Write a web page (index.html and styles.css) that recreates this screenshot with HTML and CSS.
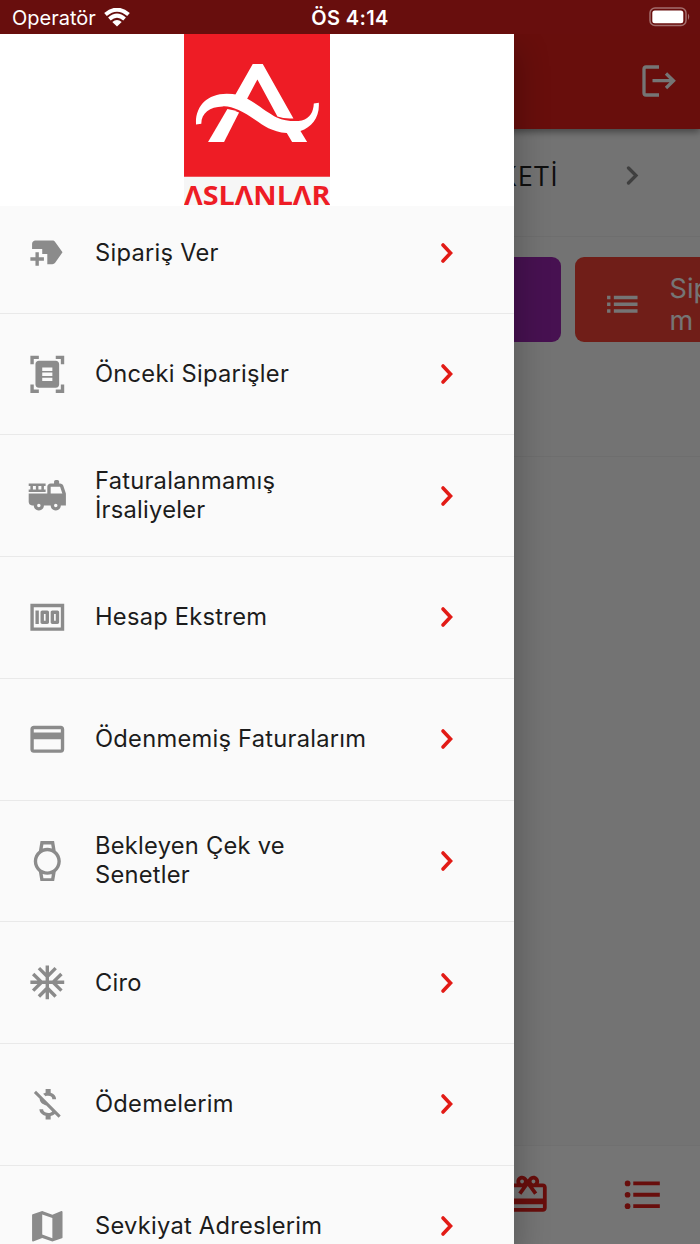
FILE: index.html
```html
<!DOCTYPE html>
<html lang="tr">
<head>
<meta charset="utf-8">
<title>Aslanlar</title>
<link rel="stylesheet" href="styles.css">
</head>
<body>
<div class="phone">
  <main class="screen">
    <header class="appbar">
      <svg class="logout" viewBox="0 0 34 32"><path d="M17 2H4Q2 2 2 4V28Q2 30 4 30H17M10.500 15.700H31M24 8.500L31.500 15.700L24 23" fill="none" stroke="currentColor" stroke-width="3.300"/></svg>
    </header>
    <section class="company">
      <span class="company-name">ŞİRKETİ</span>
      <svg class="company-arrow" viewBox="0 0 12 20"><path d="M2 2L9.500 9.500L2 17" fill="none" stroke="currentColor" stroke-width="3.300" stroke-linecap="round"/></svg>
    </section>
    <section class="cards">
      <div class="card purple"></div>
      <div class="card red">
        <svg class="icon" viewBox="0 0 24 24"><path d="M3 13h2v-2H3v2zm0 4h2v-2H3v2zm0-8h2V7H3v2zm4 4h14v-2H7v2zm0 4h14v-2H7v2zM7 7v2h14V7H7z"/></svg>
        <span class="card-label">Sip<br>m</span>
      </div>
    </section>
    <nav class="tabs">
      <svg class="tab" viewBox="0 0 24 24"><path d="M20 6h-2.180c.11-.31.18-.65.18-1 0-1.660-1.340-3-3-3-1.050 0-1.960.54-2.500 1.350l-.5.67-.5-.68C10.960 2.540 10.050 2 9 2 7.340 2 6 3.340 6 5c0 .35.07.69.18 1H4c-1.110 0-1.990.89-1.990 2L2 19c0 1.110.89 2 2 2h16c1.110 0 2-.89 2-2V8c0-1.110-.89-2-2-2zm-5-2c.55 0 1 .45 1 1s-.45 1-1 1-1-.45-1-1 .45-1 1-1zM9 4c.55 0 1 .45 1 1s-.45 1-1 1-1-.45-1-1 .45-1 1-1zm11 15H4v-2h16v2zm0-5H4V8h5.080L7 10.830 8.620 12 11 8.760l1-1.360 1 1.360L15.380 12 17 10.830 14.920 8H20v6z"/></svg>
      <svg class="tab" viewBox="0 0 24 24"><circle cx="4" cy="6" r="1.500"/><circle cx="4" cy="12" r="1.500"/><circle cx="4" cy="18" r="1.500"/><path d="M7 5h14v2H7zM7 11h14v2H7zM7 17h14v2H7z"/></svg>
    </nav>
  </main>
  <div class="scrim"></div>
  <aside class="drawer">
    <div class="brand">
      <svg class="logo" viewBox="42 12 439 514" role="img" aria-label="ASLANLAR">
        <path fill="#f6f6f6" d="M42 12H481V526H42Z"/>
        <path fill="#ee1c25" d="M42 12H481V440H42Z"/>
        <g fill="#fff">
          <path d="M248 102H278L370 265Q342 267 322 259L262 148L230 208L194 197Z"/>
          <path d="M78 283C75 230 110 191 170 191C195 191 215 196 232 206C262 222 295 250 320 262C345 273 375 275 395 271C420 264 430 245 431 220L446 218C449 262 425 290 391 303L411 336H366L350 309C305 306 280 286 256 270C218 244 185 227 158 229C118 230 93 250 94 281Z"/>
          <path d="M172 237Q190 239 207 247L162 336H114Z"/>
        </g>
        <text class="logo-text" x="42" y="524" textLength="439" lengthAdjust="spacingAndGlyphs">ΛSLΛNLΛR</text>
      </svg>
    </div>
    <ul class="menu">
      <li class="item first"><svg class="icon" viewBox="0 0 24 24"><path d="M21 12l-4.370 6.160C16.260 18.680 15.650 19 15 19h-3v-6H9v-3H3V7c0-1.100.9-2 2-2h10c.65 0 1.260.31 1.630.84L21 12zM10 15H7v-3H5v3H2v2h3v3h2v-3h3z"/></svg><span class="label">Sipariş Ver</span><svg class="chev" viewBox="0 0 14 22"><path d="M3 3L10.500 11L3 19"/></svg></li>
      <li class="item"><svg class="icon" viewBox="0 0 24 24"><path fill-rule="evenodd" d="M7 3H4v3H2V1h5zM22 6V1h-5v2h3v3zM7 21H4v-3H2v5h5zM20 18v3h-3v2h5v-5zM19 18c0 1.100-.9 2-2 2H7c-1.100 0-2-.9-2-2V6c0-1.100.9-2 2-2h10c1.100 0 2 .9 2 2zM15 8H9v2h6zM15 11H9v2h6zM15 14H9v2h6z"/></svg><span class="label">Önceki Siparişler</span><svg class="chev" viewBox="0 0 14 22"><path d="M3 3L10.500 11L3 19"/></svg></li>
      <li class="item"><svg class="icon" viewBox="0 0 24 24"><path fill-rule="evenodd" d="M22.900 10.690l-1.440-4.320C21.180 5.550 20.420 5 19.560 5H19V4c0-.55-.45-1-1-1h-1c-.55 0-1 .45-1 1v1h-2c-1.100 0-2 .9-2 2v4H1v5c0 1.100.9 2 2 2h1c0 1.660 1.340 3 3 3s3-1.340 3-3h4c0 1.660 1.340 3 3 3s3-1.340 3-3h3v-6.680c0-.21-.03-.42-.1-.63zM7 19c-.55 0-1-.45-1-1s.45-1 1-1 1 .45 1 1-.45 1-1 1zM17 19c-.55 0-1-.45-1-1s.45-1 1-1 1 .45 1 1-.45 1-1 1zM14 11V7h5.560l1.330 4zM11 8.500h-1v-2h1V5H1v1.500h1v2H1V10h10zM5.250 8.500H3.500v-2h1.750zM8.500 8.500H6.750v-2H8.500z"/></svg><span class="label">Faturalanmamış<br>İrsaliyeler</span><svg class="chev" viewBox="0 0 14 22"><path d="M3 3L10.500 11L3 19"/></svg></li>
      <li class="item"><svg class="icon" viewBox="0 0 24 24"><path fill-rule="evenodd" d="M5 8h2v8H5zM12 8H9c-.55 0-1 .45-1 1v6c0 .55.45 1 1 1h3c.55 0 1-.45 1-1V9c0-.55-.45-1-1-1zM11 14h-1v-4h1zM18 8h-3c-.55 0-1 .45-1 1v6c0 .55.45 1 1 1h3c.55 0 1-.45 1-1V9c0-.55-.45-1-1-1zM17 14h-1v-4h1zM2 4v16h20V4zM20 18H4V6h16z"/></svg><span class="label">Hesap Ekstrem</span><svg class="chev" viewBox="0 0 14 22"><path d="M3 3L10.500 11L3 19"/></svg></li>
      <li class="item"><svg class="icon" viewBox="0 0 24 24"><path d="M20 4H4c-1.110 0-1.990.89-1.990 2L2 18c0 1.110.89 2 2 2h16c1.110 0 2-.89 2-2V6c0-1.110-.89-2-2-2zm0 14H4v-6h16v6zm0-10H4V6h16v2z"/></svg><span class="label">Ödenmemiş Faturalarım</span><svg class="chev" viewBox="0 0 14 22"><path d="M3 3L10.500 11L3 19"/></svg></li>
      <li class="item"><svg class="icon" viewBox="0 0 24 24"><path d="M14.310 2l.41 2.480C13.870 4.170 12.960 4 12 4c-.95 0-1.870.17-2.710.47L9.700 2h4.600m.41 17.520L14.310 22H9.700l-.41-2.470c.84.3 1.760.47 2.710.47.96 0 1.870-.17 2.720-.48M16 0H8l-.95 5.730C5.190 7.190 4 9.450 4 12s1.190 4.810 3.050 6.270L8 24h8l.96-5.730C18.810 16.810 20 14.540 20 12s-1.190-4.810-3.040-6.270L16 0zm-4 18c-3.310 0-6-2.690-6-6s2.690-6 6-6 6 2.690 6 6-2.690 6-6 6z"/></svg><span class="label">Bekleyen Çek ve<br>Senetler</span><svg class="chev" viewBox="0 0 14 22"><path d="M3 3L10.500 11L3 19"/></svg></li>
      <li class="item"><svg class="icon" viewBox="0 0 24 24"><path d="M22 11h-4.170l3.240-3.240-1.410-1.420L15 11h-2V9l4.660-4.660-1.420-1.410L13 6.170V2h-2v4.170L7.760 2.930 6.340 4.340 11 9v2H9L4.340 6.340 2.930 7.760 6.170 11H2v2h4.170l-3.240 3.240 1.410 1.420L9 13h2v2l-4.660 4.660 1.420 1.410L11 17.830V22h2v-4.170l3.240 3.240 1.420-1.410L13 15v-2h2l4.660 4.660 1.410-1.420L17.830 13H22z"/></svg><span class="label">Ciro</span><svg class="chev" viewBox="0 0 14 22"><path d="M3 3L10.500 11L3 19"/></svg></li>
      <li class="item"><svg class="icon" viewBox="0 0 24 24"><path d="M12.500 6.900c1.780 0 2.440.85 2.500 2.100h2.210c-.07-1.720-1.120-3.300-3.210-3.810V3h-3v2.160c-.53.12-1.030.3-1.480.54l1.470 1.470c.41-.17.91-.27 1.510-.27zM5.330 4.060L4.060 5.330 7.500 8.770c0 2.080 1.560 3.210 3.910 3.910l3.510 3.510c-.34.48-1.050.91-2.420.91-2.060 0-2.870-.92-2.980-2.100h-2.200c.12 2.190 1.760 3.420 3.680 3.830V21h3v-2.150c.96-.18 1.820-.55 2.450-1.120l2.220 2.220 1.270-1.270L5.330 4.060z"/></svg><span class="label">Ödemelerim</span><svg class="chev" viewBox="0 0 14 22"><path d="M3 3L10.500 11L3 19"/></svg></li>
      <li class="item"><svg class="icon" viewBox="0 0 24 24"><path d="M20.500 3l-.16.03L15 5.100 9 3 3.360 4.900c-.21.07-.36.25-.36.48V20.500c0 .28.22.5.5.5l.16-.03L9 18.900l6 2.100 5.640-1.900c.21-.07.36-.25.36-.48V3.500c0-.28-.22-.5-.5-.5zM15 19l-6-2.110V5l6 2.110V19z"/></svg><span class="label">Sevkiyat Adreslerim</span><svg class="chev" viewBox="0 0 14 22"><path d="M3 3L10.500 11L3 19"/></svg></li>
    </ul>
  </aside>
  <div class="status">
    <div class="carrier"><span class="operator">Operatör</span>
      <svg class="wifi" viewBox="0 0 26 19"><path d="M1.500 6.600Q13-3.200 24.500 6.600M5.400 11Q13 4.400 20.600 11" fill="none" stroke="#fff" stroke-width="4"/><path fill="#fff" d="M8.300 14Q13 10 17.700 14L13 18.500Z"/></svg>
    </div>
    <span class="clock">ÖS 4:14</span>
    <svg class="battery" viewBox="0 0 42 20"><rect x="1" y="1" width="36" height="17.500" rx="5" fill="none" stroke="#a36e6d" stroke-width="1.500"/><rect x="3.300" y="3.500" width="31" height="12.700" rx="2.500" fill="#fff"/><path fill="#a36e6d" d="M39 6.500Q41.500 9.700 39 13Z"/></svg>
  </div>
</div>
</body>
</html>
```
FILE: styles.css
```css
body {
  margin: 0;
  font-family: Inter, "Open Sans", sans-serif;
}

.phone {
  position: relative;
  width: 700px;
  height: 1244px;
  overflow: hidden;
}

/* Page behind the drawer */
.screen {
  display: flex;
  flex-direction: column;
  height: 100%;
  background: #fafafa;
}

.appbar {
  display: flex;
  justify-content: flex-end;
  box-sizing: border-box;
  height: 128.500px;
  padding: 65px 24px 0 0;
  background: #e21f1c;
  color: #fff;
  box-shadow: 0 3px 7px rgba(0, 0, 0, 0.4);
  z-index: 1;
}

.logout {
  width: 34px;
  height: 32px;
}

.company {
  display: flex;
  justify-content: flex-end;
  align-items: center;
  gap: 67px;
  box-sizing: border-box;
  height: 108.500px;
  padding: 0 61px 12px 0;
  border-bottom: 1px solid #efefef;
}

.company-name {
  font: 27px/32px "Open Sans", sans-serif;
  letter-spacing: 1.300px;
  color: #222;
}

.company-arrow {
  width: 13px;
  height: 20px;
  color: #8a8a8a;
}

.cards {
  display: flex;
  gap: 14px;
  box-sizing: border-box;
  height: 220px;
  padding: 20px 0 0 341px;
  border-bottom: 1px solid #efefef;
}

.card {
  display: flex;
  flex: none;
  align-items: center;
  box-sizing: border-box;
  width: 220px;
  height: 84.500px;
  border-radius: 9px;
}

.purple {
  background: #9c27b0;
}

.red {
  gap: 27px;
  padding: 10px 0 0 27px;
  background: #f44336;
  color: #fff;
}

.card-label {
  padding-top: 2px;
  font-size: 27px;
  line-height: 32px;
}

.tabs {
  display: flex;
  gap: 69.500px;
  box-sizing: border-box;
  height: 99.500px;
  margin-top: auto;
  padding: 26px 0 0 504.500px;
  background: #fff;
  border-top: 1px solid #f3f3f3;
  color: #e21f1c;
}

.tab {
  width: 45.500px;
  height: 45.500px;
  fill: currentColor;
}

.scrim {
  position: absolute;
  inset: 0;
  z-index: 2;
  background: rgba(0, 0, 0, 0.54);
}

/* Drawer */
.drawer {
  position: absolute;
  inset: 34px auto 0 0;
  z-index: 3;
  width: 514px;
  background: #fafafa;
  box-shadow: 4px 14px 30px rgba(0, 0, 0, 0.24);
}

.brand {
  display: flex;
  justify-content: center;
  height: 171.500px;
  background: #fff;
}

.logo {
  width: 146.500px;
  height: 171.500px;
}

.logo-text {
  fill: #ee1c25;
  font: 700 80px "Open Sans", sans-serif;
}

.menu {
  margin: 0;
  padding: 0;
  list-style: none;
}

.item {
  display: flex;
  align-items: center;
  box-sizing: border-box;
  height: 121.710px;
  padding: 0 60px 0 27px;
  border-bottom: 1px solid #e9e9e9;
}

.first {
  height: 108.200px;
  padding-bottom: 13px;
}

.icon {
  flex: none;
  width: 40.600px;
  height: 40.600px;
  fill: currentColor;
}

.item .icon {
  color: #8b8b8b;
}

.label {
  flex: 1;
  margin-left: 27.400px;
  padding-top: 0.600px;
  color: #1c1c1c;
  font-size: 23.700px;
  line-height: 28.700px;
  letter-spacing: 0.250px;
  white-space: nowrap;
}

.chev {
  width: 14px;
  height: 22px;
  fill: none;
  stroke: #e21b16;
  stroke-width: 3.600px;
  stroke-linecap: round;
}

/* Status bar */
.status {
  position: absolute;
  inset: 0 0 auto 0;
  z-index: 4;
  display: grid;
  grid-template-columns: 1fr auto 1fr;
  align-items: center;
  height: 34px;
  padding: 0 9px 0 12px;
  background: #680e0d;
  color: #fff;
}

.carrier {
  display: flex;
  align-items: center;
  gap: 8px;
}

.operator {
  padding-top: 1px;
  font-size: 20px;
}

.wifi {
  width: 26px;
  height: 19px;
}

.clock {
  padding-top: 1px;
  margin-right: 3px;
  font-size: 20px;
  font-weight: 600;
  letter-spacing: 0.400px;
}

.battery {
  justify-self: end;
  width: 42px;
  height: 20px;
}
```
